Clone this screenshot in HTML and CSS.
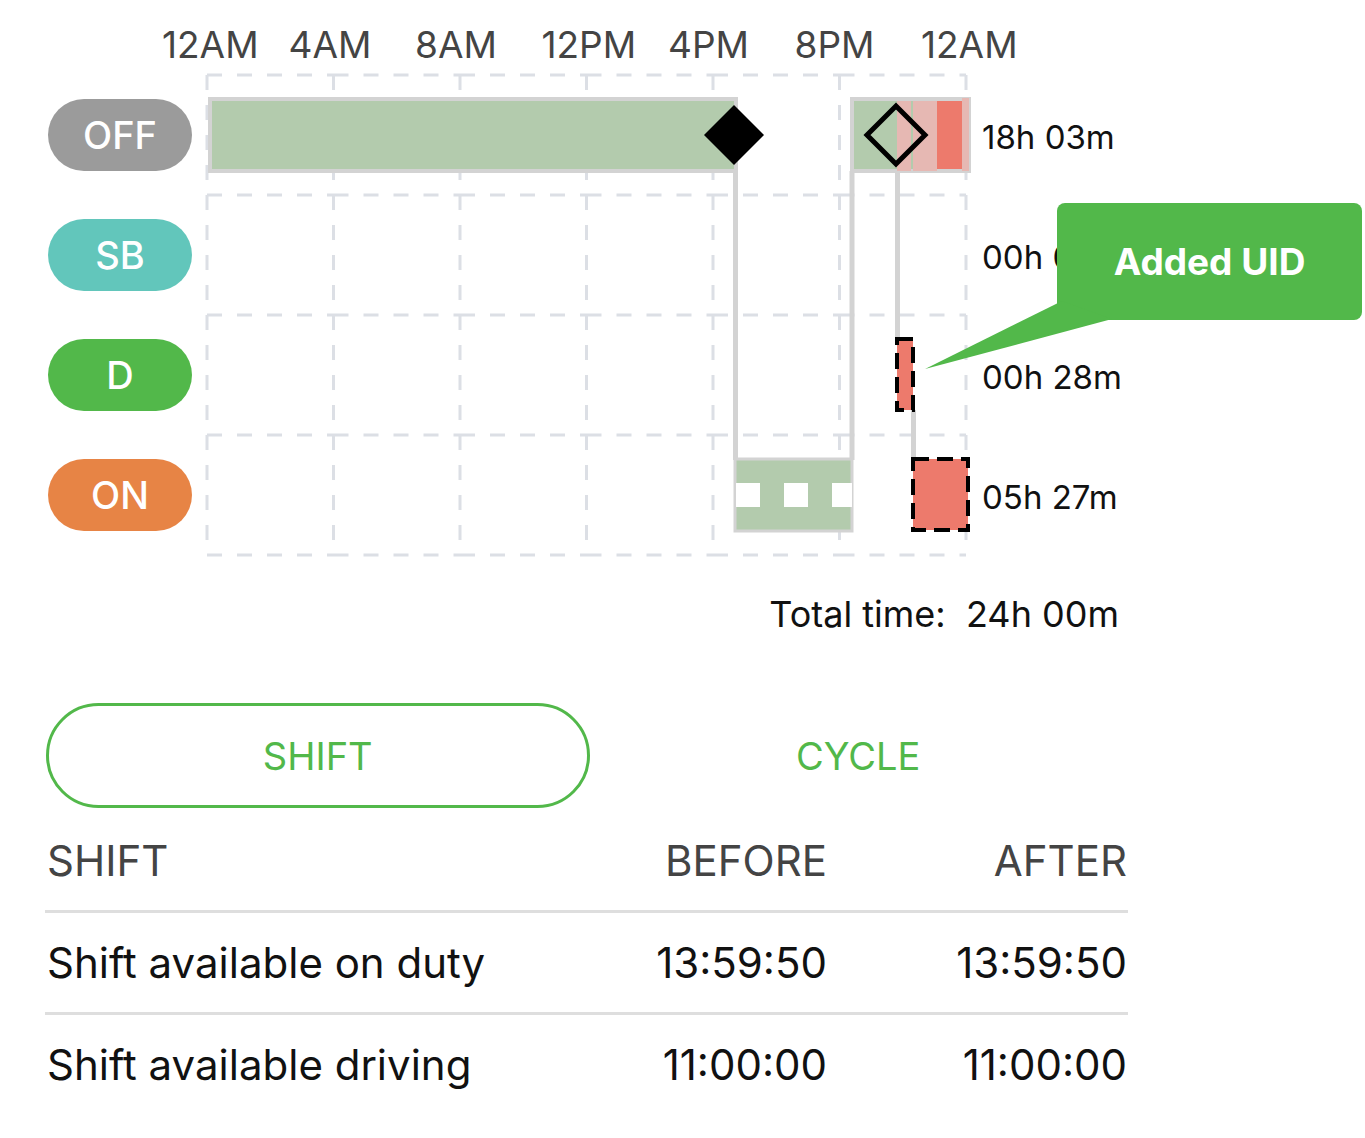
FILE: index.html
```html
<!DOCTYPE html>
<html lang="en">
<head>
    <meta charset="UTF-8">
    <title>Log graph</title>
    <link rel="stylesheet" href="styles.css">
</head>
<body>

<div class="page">
    <div class="axis">
        <span>12AM</span><span>4AM</span><span>8AM</span><span>12PM</span><span>4PM</span><span>8PM</span><span>12AM</span>
    </div>

    <div class="chart-body">
        <div class="statuses">
            <div class="row"><span class="pill off">OFF</span></div>
            <div class="row"><span class="pill sb">SB</span></div>
            <div class="row"><span class="pill d">D</span></div>
            <div class="row"><span class="pill on">ON</span></div>
        </div>

        <svg class="plot" width="770" height="486" viewBox="205 73 770 486">
            <g class="grid" id="grid"></g>

            <!-- connectors -->
            <line x1="735.5" y1="171" x2="735.5" y2="460" class="link" />
            <line x1="852" y1="171" x2="852" y2="460" class="link" />
            <line x1="897.5" y1="171" x2="897.5" y2="339" class="link" />
            <line x1="913.5" y1="410" x2="913.5" y2="460" class="link" />

            <!-- OFF -->
            <rect x="210" y="99" width="526" height="72" class="bar" />
            <rect x="852" y="99" width="117" height="72" class="bar" />
            <rect x="897" y="101" width="14" height="70" fill="#e6b8b3" />
            <rect x="913" y="101" width="24" height="70" fill="#e6b8b3" />
            <rect x="937" y="101" width="25" height="68" fill="#ed7a6c" />
            <rect x="962" y="98" width="7" height="73" fill="#e6b8b3" />
            <polygon points="734,105 764,135 734,165 704,135" fill="#000" />
            <polygon points="896,106 925,135 896,164 867,135" fill="none" stroke="#000" stroke-width="5" />

            <!-- D -->
            <rect x="897" y="339" width="16" height="71" class="edit" />

            <!-- ON -->
            <rect x="735" y="459" width="117" height="72" class="bar thin" />
            <rect x="736" y="483" width="24" height="24" fill="#fff" />
            <rect x="784" y="483" width="24" height="24" fill="#fff" />
            <rect x="832" y="483" width="20" height="24" fill="#fff" />
            <rect x="913" y="459" width="55" height="71" class="edit" />
        </svg>

        <div class="totals">
            <div class="row">18h 03m</div>
            <div class="row">00h 00m</div>
            <div class="row">00h 28m</div>
            <div class="row">05h 27m</div>
        </div>

        <div class="tooltip">
            Added UID
            <svg class="tail" width="200" height="80" viewBox="920 298 200 80">
                <polygon points="1062,301 925,369 1112,319" fill="#52b84a" />
            </svg>
        </div>
    </div>

    <div class="total">Total time:&nbsp; 24h 00m</div>

    <div class="tabs">
        <div class="tab active">SHIFT</div>
        <div class="tab">CYCLE</div>
    </div>

    <div class="hos">
        <div class="hos-row head">
            <span>SHIFT</span><span class="num">BEFORE</span><span class="num">AFTER</span>
        </div>
        <div class="hos-row">
            <span>Shift available on duty</span><span class="num">13:59:50</span><span class="num">13:59:50</span>
        </div>
        <div class="hos-row last">
            <span>Shift available driving</span><span class="num">11:00:00</span><span class="num">11:00:00</span>
        </div>
    </div>
</div>

<script>
// dashed grid, one cell at a time so every cell starts with its own corner
const gridEl = document.getElementById("grid");
const colW = 126.5, rowH = 120, gridX = 207, gridY = 75;
let d = "";
for (let j = 0; j < 4; j++) {
    for (let i = 0; i < 6; i++) {
        const x = gridX + i * colW, y = gridY + j * rowH;
        d += `M${x} ${y}h${colW}M${x} ${y}v${rowH}`;
        if (i === 5) d += `M${x + colW} ${y}v${rowH}`;
        if (j === 3) d += `M${x} ${y + rowH}h${colW}`;
    }
}
const path = document.createElementNS("http://www.w3.org/2000/svg", "path");
path.setAttribute("d", d);
gridEl.appendChild(path);
</script>

</body>
</html>
```

FILE: styles.css
```css
body { margin: 0; background: #fff; color: #111; font-family: Inter, "Noto Sans", sans-serif; }
.page { padding: 25px 0 0 48px; width: 1317px; }

.axis { display: grid; grid-template-columns: repeat(7, 126.5px); margin-left: 114px; height: 40px; font-size: 37px; line-height: 40px; color: #444; white-space: nowrap; }

.chart-body { position: relative; display: flex; margin-top: 8px; height: 486px; }
.statuses { width: 144px; padding-top: 2px; }
.statuses .row { height: 120px; display: flex; align-items: center; }
.pill { width: 144px; height: 72px; border-radius: 36px; color: #fff; font-size: 38px; font-weight: 500; display: flex; align-items: center; justify-content: center; }
.pill.off { background: #9b9b9b; }
.pill.sb { background: #62c6bb; }
.pill.d { background: #52b84a; }
.pill.on { background: #e78445; }

.plot { margin-left: 13px; display: block; }
.grid path { fill: none; stroke: #dcdfe5; stroke-width: 3; stroke-dasharray: 15 15; }
.link { stroke: #d3d3d3; stroke-width: 5; }
.bar { fill: #b3cbad; stroke: #d3d3d3; stroke-width: 4; }
.bar.thin { stroke-width: 3; }
.edit { fill: #ed7a6c; stroke: #000; stroke-width: 4; stroke-dasharray: 16 8; }

.totals { margin-left: 7px; padding-top: 4px; font-size: 33px; white-space: nowrap; }
.totals .row { height: 120px; display: flex; align-items: center; }

.tooltip { position: absolute; left: 1009px; top: 130px; width: 305px; height: 117px; border-radius: 8px; background: #52b84a; color: #fff; font-size: 37px; font-weight: 700; display: flex; align-items: center; justify-content: center; }
.tail { position: absolute; left: -137px; top: 95px; }

.total { width: 1071px; text-align: right; margin-top: 35px; font-size: 36px; line-height: 40px; }

.tabs { display: flex; width: 1081px; margin: 69px 0 0 -2px; }
.tab { flex: 1; height: 105px; box-sizing: border-box; border-radius: 53px; display: flex; align-items: center; justify-content: center; font-size: 38px; color: #52b84a; }
.tab.active { border: 3px solid #52b84a; }

.hos { width: 1083px; margin: 3px 0 0 -3px; }
.hos-row { display: grid; grid-template-columns: 1fr 300px 300px; align-items: center; height: 99px; border-bottom: 3px solid #dedede; font-size: 42px; padding: 0 1px 0 2px; }
.hos-row.head { color: #444; }
.hos-row.last { border-bottom: none; }
.num { text-align: right; }
```
